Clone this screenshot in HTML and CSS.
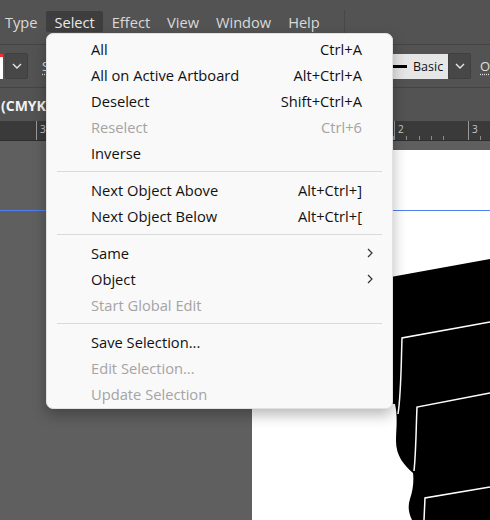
FILE: index.html
```html
<!DOCTYPE html>
<html lang="en">
<head>
    <meta charset="UTF-8">
    <meta name="viewport" content="width=device-width, initial-scale=1.0">
    <title>Select Menu</title>
    <link rel="stylesheet" href="styles.css">
</head>
<body>

    <div class="app">
        <header class="menubar">
            <span class="menubar-item">Type</span>
            <span class="menubar-item is-open">Select</span>
            <span class="menubar-item">Effect</span>
            <span class="menubar-item">View</span>
            <span class="menubar-item">Window</span>
            <span class="menubar-item">Help</span>
            <span class="menubar-sep"></span>
        </header>

        <div class="controlbar">
            <div class="ctrl-left">
                <span class="swatch"></span>
                <span class="drop-btn">
                    <svg width="10" height="6" viewBox="0 0 10 6"><path d="M1 1 L5 5 L9 1" /></svg>
                </span>
                <span class="ctrl-label">Stroke:</span>
            </div>
            <div class="brush-box">
                <span class="brush-line"></span>
                <span class="brush-name">Basic</span>
            </div>
            <span class="drop-btn">
                <svg width="10" height="6" viewBox="0 0 10 6"><path d="M1 1 L5 5 L9 1" /></svg>
            </span>
            <span class="ctrl-label opacity">Opacity:</span>
        </div>

        <div class="tabbar">
            <span class="doc-tab">(CMYK/Preview)</span>
        </div>

        <div class="ruler">
            <span class="ruler-lead"></span>
            <span class="ruler-unit wide">3</span>
            <span class="ruler-unit">2</span>
            <span class="ruler-unit">3</span>
        </div>

        <main class="canvas">
            <div class="artboard">
                <!-- stacked panels artwork -->
                <svg class="art" width="238" height="370" viewBox="252 150 238 370">
                    <path class="art-fill" d="M330 288 L490 259 L490 520 L412 520 C408 512 408 505 410 499 C413 490 414 481 413 473 C404 465 396 456 396 441 C396 429 398 418 395 404 L330 400 Z" />
                    <path class="art-edge" d="M490 322 L402 338 C401 370 401 395 398 414" />
                    <path class="art-edge" d="M490 393 L417 407 C416 430 416 452 414 471" />
                    <path class="art-edge" d="M490 487 L425 498 L424 520" />
                </svg>
            </div>
            <div class="guide"></div>
        </main>

        <div class="dropdown">
            <div class="menu-item"><span class="label">All</span><span class="shortcut">Ctrl+A</span></div>
            <div class="menu-item"><span class="label">All on Active Artboard</span><span class="shortcut">Alt+Ctrl+A</span></div>
            <div class="menu-item"><span class="label">Deselect</span><span class="shortcut">Shift+Ctrl+A</span></div>
            <div class="menu-item is-disabled"><span class="label">Reselect</span><span class="shortcut">Ctrl+6</span></div>
            <div class="menu-item"><span class="label">Inverse</span></div>
            <div class="menu-sep"></div>
            <div class="menu-item"><span class="label">Next Object Above</span><span class="shortcut">Alt+Ctrl+]</span></div>
            <div class="menu-item"><span class="label">Next Object Below</span><span class="shortcut">Alt+Ctrl+[</span></div>
            <div class="menu-sep"></div>
            <div class="menu-item">
                <span class="label">Same</span>
                <svg class="arrow" width="6" height="10" viewBox="0 0 6 10"><path d="M1 1 L5 5 L1 9" /></svg>
            </div>
            <div class="menu-item">
                <span class="label">Object</span>
                <svg class="arrow" width="6" height="10" viewBox="0 0 6 10"><path d="M1 1 L5 5 L1 9" /></svg>
            </div>
            <div class="menu-item is-disabled"><span class="label">Start Global Edit</span></div>
            <div class="menu-sep"></div>
            <div class="menu-item"><span class="label">Save Selection...</span></div>
            <div class="menu-item is-disabled"><span class="label">Edit Selection...</span></div>
            <div class="menu-item is-disabled"><span class="label">Update Selection</span></div>
        </div>
    </div>

</body>
</html>
```

FILE: styles.css
```css
body {
    margin: 0;
    padding: 0;
    width: 490px;
    height: 520px;
    overflow: hidden;
    background-color: #5f5f5f;
    font-family: 'Open Sans', 'Noto Sans', sans-serif;
}

.app {
    position: relative;
    display: flex;
    flex-direction: column;
    height: 520px;
}

/* Top menu bar */
.menubar {
    display: flex;
    align-items: center;
    height: 44px;
    background-color: #535353;
    margin-left: -3px;
}

.menubar-item {
    height: 20px;
    line-height: 20px;
    padding: 1px 8px 0 8px;
    margin-right: 1px;
    font-size: 14.6px;
    color: #dadada;
    border-radius: 2px;
}

.menubar-item.is-open {
    background-color: #3e3e3e;
    color: #e8e8e8;
}

.menubar-sep {
    width: 1px;
    height: 23px;
    margin-left: 15px;
    background-color: #484848;
}

/* Control bar */
.controlbar {
    display: flex;
    align-items: center;
    height: 43px;
    border-top: 1px solid #444;
    background-color: #535353;
    white-space: nowrap;
}

.ctrl-left {
    display: flex;
    align-items: center;
    width: 382px;
    flex-shrink: 0;
}

.swatch {
    width: 3px;
    height: 25px;
    background: linear-gradient(to bottom, #e33 0 3px, #fff 3px);
}

.drop-btn {
    display: flex;
    align-items: center;
    justify-content: center;
    width: 21px;
    height: 24px;
    margin-left: 2px;
    background-color: #474747;
    border: 1px solid #3f3f3f;
    border-radius: 2px;
    flex-shrink: 0;
}

.drop-btn svg path {
    fill: none;
    stroke: #e6e6e6;
    stroke-width: 1.4;
}

.ctrl-label {
    margin-left: 14px;
    font-size: 13px;
    color: #e0e0e0;
    text-decoration: underline dotted;
    text-underline-offset: 3px;
}

.ctrl-label.opacity {
    margin-left: 9px;
}

.brush-box {
    display: flex;
    align-items: center;
    width: 66px;
    height: 25px;
    background-color: #e6e6e6;
    flex-shrink: 0;
}

.brush-line {
    width: 14px;
    height: 3px;
    margin-left: 11px;
    background-color: #000;
}

.brush-name {
    margin-left: 6px;
    font-size: 12.5px;
    color: #111;
}

.controlbar > .drop-btn {
    margin-left: 0;
}

/* Document tab strip */
.tabbar {
    display: flex;
    align-items: center;
    height: 33px;
    border-top: 1px solid #444;
    background-color: #535353;
}

.doc-tab {
    margin-left: 1px;
    margin-top: 2px;
    font-size: 14px;
    font-weight: bold;
    color: #f2f2f2;
    white-space: nowrap;
}

/* Horizontal ruler */
.ruler {
    display: flex;
    height: 19px;
    background-color: #3a3a3a;
    border-bottom: 1px solid #2e2e2e;
}

.ruler-lead {
    width: 36px;
    flex-shrink: 0;
}

.ruler-unit {
    width: 74px;
    flex-shrink: 0;
    box-sizing: border-box;
    padding: 3px 0 0 3px;
    border-left: 1px solid #9a9a9a;
    font-size: 10px;
    line-height: 11px;
    color: #c9c9c9;
    background-image: repeating-linear-gradient(to right, transparent 0 11.3px, #8c8c8c 11.3px 12.3px);
    background-size: 100% 4px;
    background-position: left bottom;
    background-repeat: no-repeat;
}

.ruler-unit.wide {
    width: 358px;
}

/* Canvas and artboard */
.canvas {
    position: relative;
    flex: 1;
    background-color: #5f5f5f;
}

.artboard {
    width: 238px;
    height: 370px;
    margin: 9px 0 0 252px;
    background-color: #fff;
}

.art {
    display: block;
}

.art-fill {
    fill: #000;
}

.art-edge {
    fill: none;
    stroke: #fff;
    stroke-width: 1.5;
}

.guide {
    position: absolute;
    top: 69px;
    left: 0;
    right: 0;
    height: 1px;
    background-color: #4f7ff3;
}

/* Select dropdown */
.dropdown {
    position: absolute;
    top: 33px;
    left: 46px;
    width: 347px;
    box-sizing: border-box;
    padding: 2px 0 1px 0;
    background-color: #f9f9f9;
    border: 1px solid #e2e2e2;
    border-radius: 7px;
    box-shadow: 0 6px 14px rgba(0, 0, 0, 0.28);
}

.menu-item {
    display: flex;
    align-items: center;
    height: 26px;
    padding: 0 30px 0 44px;
    font-size: 14.7px;
    color: #111;
    white-space: nowrap;
}

.menu-item .label {
    flex: 1;
}

.menu-item.is-disabled {
    color: #a4a4a4;
}

.menu-item .arrow {
    margin-right: -11px;
}

.menu-item .arrow path {
    fill: none;
    stroke: #333;
    stroke-width: 1.2;
}

.menu-sep {
    height: 1px;
    margin: 5px 10px;
    background-color: #dadada;
}
```
